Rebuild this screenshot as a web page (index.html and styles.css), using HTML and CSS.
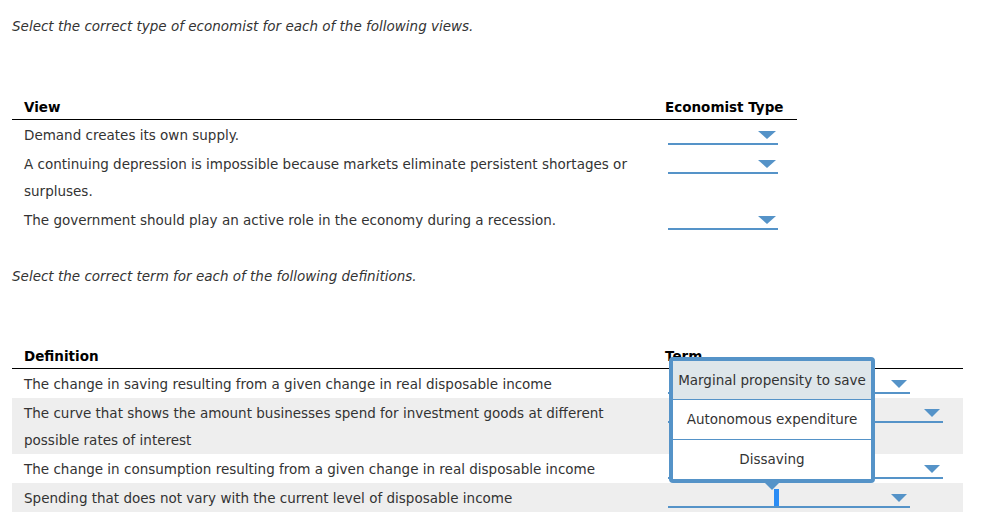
FILE: index.html
```html
<!DOCTYPE html>
<html>
<head>
  <link rel="stylesheet" href="styles.css">
</head>
<body>

<div class="question">
  <p class="prompt">Select the correct type of economist for each of the following views.</p>

  <table class="match-table table-views">
    <colgroup>
      <col class="col-text">
      <col>
    </colgroup>
    <thead>
      <tr>
        <th class="head-text">View</th>
        <th class="head-pick">Economist Type</th>
      </tr>
    </thead>
    <tbody>
      <tr>
        <td class="cell-text">Demand creates its own supply.</td>
        <td class="cell-pick"><span class="dropdown dd-short"></span></td>
      </tr>
      <tr>
        <td class="cell-text">A continuing depression is impossible because markets eliminate persistent shortages or surpluses.</td>
        <td class="cell-pick"><span class="dropdown dd-short"></span></td>
      </tr>
      <tr>
        <td class="cell-text">The government should play an active role in the economy during a recession.</td>
        <td class="cell-pick"><span class="dropdown dd-short"></span></td>
      </tr>
    </tbody>
  </table>

  <p class="prompt prompt-second">Select the correct term for each of the following definitions.</p>

  <table class="match-table table-terms">
    <colgroup>
      <col class="col-text">
      <col>
    </colgroup>
    <thead>
      <tr>
        <th class="head-text">Definition</th>
        <th class="head-pick">Term</th>
      </tr>
    </thead>
    <tbody>
      <tr>
        <td class="cell-text">The change in saving resulting from a given change in real disposable income</td>
        <td class="cell-pick"><span class="dropdown dd-mid"></span></td>
      </tr>
      <tr class="shaded">
        <td class="cell-text">The curve that shows the amount businesses spend for investment goods at different possible rates of interest</td>
        <td class="cell-pick"><span class="dropdown dd-long"></span></td>
      </tr>
      <tr>
        <td class="cell-text">The change in consumption resulting from a given change in real disposable income</td>
        <td class="cell-pick"><span class="dropdown dd-long"></span></td>
      </tr>
      <tr class="shaded">
        <td class="cell-text">Spending that does not vary with the current level of disposable income</td>
        <td class="cell-pick">
          <span class="dropdown dd-mid is-open">
            <span class="caret-bar"></span>
            <ul class="choice-menu">
              <li class="choice active">Marginal propensity to save</li>
              <li class="choice">Autonomous expenditure</li>
              <li class="choice">Dissaving</li>
            </ul>
          </span>
        </td>
      </tr>
    </tbody>
  </table>
</div>

</body>
</html>
```

FILE: styles.css
```css
body {
  margin: 0;
  padding: 0 12px;
  background: #fff;
  font-family: "DejaVu Sans", Verdana, sans-serif;
  font-size: 13.5px;
  color: #333;
}

.prompt {
  margin: 17px 0 0 0;
  line-height: 18px;
  font-style: italic;
}

.prompt-second {
  margin-top: 33px;
}

.match-table {
  border-collapse: collapse;
  table-layout: fixed;
  font-size: 13.5px;
  margin-top: 62px;
}

.table-views {
  width: 785px;
}

.table-terms {
  width: 951px;
  margin-top: 61px;
}

.col-text {
  width: 644px;
}

th {
  font-weight: bold;
  color: #000;
  text-align: left;
  line-height: 20px;
  padding: 0 0 2px 0;
  border-bottom: 1px solid #000;
}

.head-text {
  padding-left: 12px;
}

.head-pick {
  padding-left: 9px;
  white-space: nowrap;
}

td {
  padding: 2px 0 0 0;
  line-height: 27px;
  vertical-align: top;
}

.cell-text {
  padding-left: 12px;
  padding-right: 0;
}

.cell-pick {
  padding-left: 12px;
}

.shaded td {
  background: #eeeeee;
}

.dropdown {
  position: relative;
  display: flex;
  justify-content: flex-end;
  align-items: flex-end;
  height: 23px;
  border-bottom: 2px solid #5593c8;
  box-sizing: border-box;
}

.dropdown::after {
  content: "";
  width: 0;
  height: 0;
  margin: 0 2px 4px 0;
  border-left: 9px solid transparent;
  border-right: 9px solid transparent;
  border-top: 8px solid #5593c8;
}

.dd-short {
  width: 110px;
}

.dd-mid {
  width: 242px;
}

.dd-long {
  width: 275px;
}

.dd-mid::after,
.dd-long::after {
  margin-right: 3px;
  border-left-width: 8px;
  border-right-width: 8px;
}

/* open menu over the last row */
.caret-bar {
  position: absolute;
  left: 106px;
  bottom: 0;
  width: 5px;
  height: 17px;
  background: #2a8cf5;
}

.choice-menu {
  position: absolute;
  left: 1px;
  bottom: 23px;
  width: 206px;
  margin: 0;
  padding: 0;
  list-style: none;
  background: #fff;
  border: 4px solid #5593c8;
  border-radius: 4px;
  box-sizing: border-box;
  z-index: 2;
}

.choice-menu::after {
  content: "";
  position: absolute;
  left: 92px;
  bottom: -11px;
  width: 0;
  height: 0;
  border-left: 7px solid transparent;
  border-right: 7px solid transparent;
  border-top: 7px solid #5593c8;
}

.choice {
  height: 39px;
  line-height: 39px;
  text-align: center;
  white-space: nowrap;
  border-top: 1px solid #5593c8;
}

.choice:first-child {
  border-top: none;
  height: 38px;
  line-height: 38px;
}

.choice.active {
  background: #dee6ea;
}
```
